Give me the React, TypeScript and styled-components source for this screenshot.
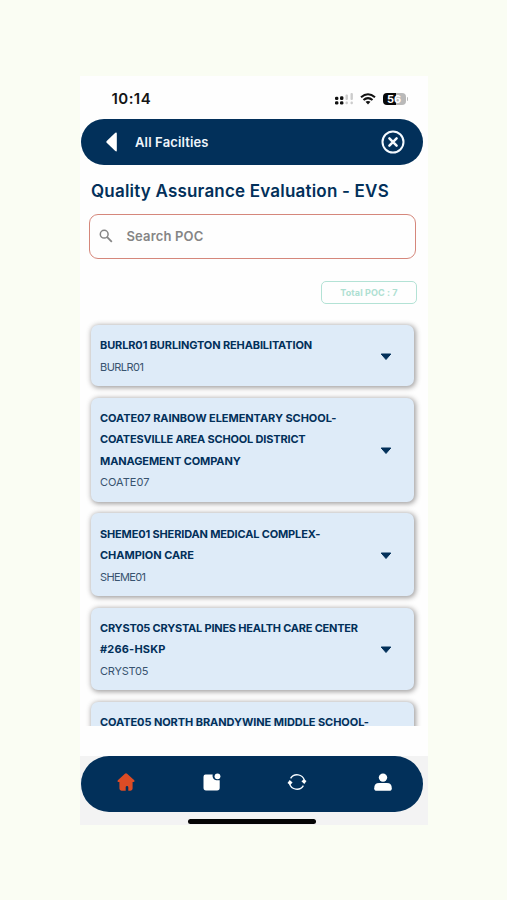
import React from "react";
import styled, { createGlobalStyle } from "styled-components";

const navy = "#02305a";

const GlobalStyle = createGlobalStyle`
  * { box-sizing: border-box; }
  body { margin: 0; background: #fafdf3; font-family: Inter, "Open Sans", sans-serif; color: ${navy}; }
`;

const Page = styled.div`
  height: 900px;
  padding: 76px 79px 0 80px;
  overflow: hidden;
  background: #fafdf3;
`;

const Phone = styled.main`
  display: flex;
  flex-direction: column;
  height: 749px;
  background: #fefefe;
`;

const StatusBar = styled.div`
  display: flex;
  align-items: center;
  justify-content: space-between;
  height: 43px;
  padding: 2px 20px 0 31.5px;
`;

const Text = styled.span<{ $size: number; $weight?: number; $spacing?: number; $color?: string }>`
  display: block;
  white-space: nowrap;
  font-size: ${(p) => p.$size}px;
  font-weight: ${(p) => p.$weight ?? 600};
  letter-spacing: ${(p) => p.$spacing ?? 0}px;
  color: ${(p) => p.$color ?? navy};
`;

const StatusIcons = styled.div`
  display: flex;
  align-items: center;
  gap: 6.5px;
`;

const Battery = styled.div`
  display: flex;
  align-items: center;
  gap: 1px;
`;

const BatteryBody = styled.div`
  width: 23px;
  height: 12px;
  border-radius: 4px;
  background: linear-gradient(90deg, #080808 56%, #b9b9b9 56%);
  color: #fff;
  font-size: 11px;
  font-weight: 700;
  line-height: 12px;
  text-align: center;
`;

const BatteryTip = styled.div`
  width: 1.5px;
  height: 4px;
  border-radius: 0 2px 2px 0;
  background: #b9b9b9;
`;

const Header = styled.header`
  display: flex;
  align-items: center;
  height: 46px;
  margin: 0 5px 0 1px;
  padding: 0 18px 0 25px;
  border-radius: 23px;
  background: ${navy};
`;

const HeaderLabel = styled.div`
  flex: 1;
  padding-left: 18px;
`;

const Title = styled.h1`
  margin: 13px 0 9px 11px;
  height: 27px;
  font-size: 17px;
  font-weight: 600;
  line-height: 27px;
  letter-spacing: 0.2px;
  white-space: nowrap;
`;

const Search = styled.div`
  display: flex;
  align-items: center;
  gap: 14px;
  height: 45px;
  margin: 0 12px 0 8.5px;
  padding: 0 0 1px 9px;
  border: 1.5px solid #d5877b;
  border-radius: 9px;
`;

const Total = styled.div`
  display: flex;
  align-items: center;
  justify-content: center;
  align-self: flex-end;
  width: 96px;
  height: 23px;
  margin: 22px 11px 0 0;
  border: 1.5px solid #b3e2d5;
  border-radius: 5px;
`;

const List = styled.div`
  display: flex;
  flex-direction: column;
  gap: 11.3px;
  height: 410px;
  margin-top: 12px;
  padding: 9px 14px 0 11px;
  overflow: hidden;
`;

const Card = styled.article`
  display: flex;
  flex: none;
  align-items: center;
  justify-content: space-between;
  padding: 10.2px 22px 8.2px 9px;
  border-radius: 7px;
  background: #deebf8;
  box-shadow: 1px 1px 5px 1px rgba(55, 50, 50, 0.45);
`;

const CardText = styled.div`
  line-height: 21.5px;
`;

const Spacer = styled.div`
  flex: 1;
`;

const Bottom = styled.footer`
  height: 69px;
  padding: 0 5px 0 1px;
  background: #f3f3f3;
`;

const Nav = styled.nav`
  display: flex;
  align-items: center;
  justify-content: space-between;
  height: 56px;
  padding: 0 30px 5px 35px;
  border-radius: 28px;
  background: ${navy};
`;

const HomeIndicator = styled.div`
  width: 128px;
  height: 4.5px;
  margin: 7px auto 0;
  border-radius: 3px;
  background: #050505;
`;

type Line = [text: string, spacing: number];

const facilities: { lines: Line[]; code?: Line }[] = [
  { lines: [["BURLR01 BURLINGTON REHABILITATION", -0.13]], code: ["BURLR01", -0.55] },
  {
    lines: [
      ["COATE07 RAINBOW ELEMENTARY SCHOOL-", -0.06],
      ["COATESVILLE AREA SCHOOL DISTRICT", -0.18],
      ["MANAGEMENT COMPANY", -0.1],
    ],
    code: ["COATE07", 0],
  },
  { lines: [["SHEME01 SHERIDAN MEDICAL COMPLEX-", -0.16], ["CHAMPION CARE", -0.04]], code: ["SHEME01", -0.65] },
  { lines: [["CRYST05 CRYSTAL PINES HEALTH CARE CENTER", -0.22], ["#266-HSKP", 0.18]], code: ["CRYST05", -0.2] },
  { lines: [["COATE05 NORTH BRANDYWINE MIDDLE SCHOOL-", -0.07]] },
];

const Signal = () => (
  <svg width="19" height="12" viewBox="0 0 19 12">
    <g fill="#111">
      <rect y="3.7" width="3.4" height="3.3" rx="1.3" />
      <rect y="8.2" width="3.4" height="3.3" rx="1.3" />
      <rect x="5" y="3.2" width="3.4" height="3.8" rx="1.3" />
      <rect x="5" y="8.2" width="3.4" height="3.3" rx="1.3" />
    </g>
    <g fill="#ccc">
      <rect x="10.5" y="1.5" width="2.4" height="5.5" rx="1" />
      <rect x="10.5" y="8.4" width="2.4" height="2.8" rx="1" />
      <rect x="15.5" y="0" width="2.4" height="7" rx="1" />
      <rect x="15.5" y="8.4" width="2.4" height="2.8" rx="1" />
    </g>
  </svg>
);

const Wifi = () => (
  <svg width="16" height="12" viewBox="0 0 16 12" fill="none" stroke="#111" strokeWidth="2.1">
    <path d="M1 4.2Q8-1.7 15 4.2" />
    <path d="M3.5 7Q8 3.1 12.5 7" />
    <path d="M5.5 8.8Q8 7 10.5 8.8L8 11.6Z" fill="#111" stroke="none" />
  </svg>
);

const Back = () => (
  <svg width="11" height="20" viewBox="0 0 11 20">
    <path d="M.7 9.1 9.3.7Q10.8-.2 10.8 1.5V18.5Q10.8 20 9.3 19L.7 10.7Q0 9.9.7 9.1Z" fill="#fff" />
  </svg>
);

const Close = () => (
  <svg width="24" height="24" viewBox="0 0 24 24" fill="none" stroke="#f5faff" strokeLinecap="round">
    <circle cx="12" cy="12" r="10.5" strokeWidth="2" />
    <path d="m8.4 8.4 7.2 7.2m0-7.2-7.2 7.2" strokeWidth="2.5" />
  </svg>
);

const Magnifier = () => (
  <svg width="14" height="14" viewBox="0 0 14 14" fill="none" stroke="#858585" strokeWidth="1.5">
    <circle cx="5.2" cy="5.2" r="3.9" />
    <path d="m8.2 8.2 4.6 4.6" strokeWidth="1.8" />
  </svg>
);

const Caret = () => (
  <svg width="12" height="8" viewBox="0 0 12 8">
    <path d="M1.2 1H10.8L6 6.5Z" fill={navy} stroke={navy} strokeLinejoin="round" />
  </svg>
);

const Home = () => (
  <svg width="20" height="20" viewBox="0 0 20 20">
    <path d="M8.9 1.8Q10 .9 11.1 1.8L18.3 8.3Q19.2 9.8 17.5 10H16.6V16.6Q16.6 18.7 14.5 18.7H12.3V15.3Q12.3 14 11 14T9.7 15.3V18.7H5.5Q3.4 18.7 3.4 16.6V10H2.3Q.8 9.7 1.8 8.3Z" fill="#dc4c25" />
  </svg>
);

const Note = () => (
  <svg width="20" height="20" viewBox="0 0 20 20" fill="#fff">
    <path d="M3.5 2.4H10.7C9.9 6 12.5 9 17.7 8.2V15.8Q17.7 18.4 15.1 18.4H4Q1.5 18.4 1.5 15.8V4.8Q1.5 2.4 3.5 2.4Z" />
    <circle cx="15.5" cy="4.3" r="2.9" />
  </svg>
);

const Sync = () => (
  <svg width="20" height="20" viewBox="0 0 20 20" fill="none" stroke="#f5faff" strokeWidth="1.4">
    <path d="M3.6 6.4A7.6 7.6 0 0 1 17.4 8.4M16.4 13.6A7.6 7.6 0 0 1 2.6 11.6" />
    <path d="M.5 10.9 2.7 8 5.6 10.5 3.1 12.9ZM14.4 9.3 17 7.2 19.5 9.1 17.3 12Z" fill="#fff" stroke="none" />
  </svg>
);

const User = () => (
  <svg width="20" height="20" viewBox="0 0 20 20" fill="#fff">
    <circle cx="10" cy="5.6" r="4.2" />
    <path d="M6.1 11H13.9Q18.8 11 18.8 16.2 18.8 18.8 16.2 18.8H3.8Q1.2 18.8 1.2 16.2 1.2 11 6.1 11Z" />
  </svg>
);

export default function App() {
  return (
    <Page>
      <GlobalStyle />
      <Phone>
        <StatusBar>
          <Text $size={15} $spacing={0.45} $color="#151515">10:14</Text>
          <StatusIcons>
            <Signal />
            <Wifi />
            <Battery><BatteryBody>56</BatteryBody><BatteryTip /></Battery>
          </StatusIcons>
        </StatusBar>
        <Header>
          <Back />
          <HeaderLabel><Text $size={13} $spacing={0.14} $color="#f0f6fc">All Facilties</Text></HeaderLabel>
          <Close />
        </Header>
        <Title>Quality Assurance Evaluation - EVS</Title>
        <Search>
          <Magnifier />
          <Text $size={13} $spacing={0.15} $color="#858585">Search POC</Text>
        </Search>
        <Total><Text $size={9} $weight={700} $spacing={0.12} $color="#aee0d2">Total POC : 7</Text></Total>
        <List>
          {facilities.map(({ lines, code }) => (
            <Card key={lines[0][0]}>
              <CardText>
                {lines.map(([text, spacing]) => (
                  <Text key={text} $size={11} $weight={700} $spacing={spacing}>{text}</Text>
                ))}
                {code && <Text $size={11} $weight={400} $spacing={code[1]} $color="#38536f">{code[0]}</Text>}
              </CardText>
              {code && <Caret />}
            </Card>
          ))}
        </List>
        <Spacer />
        <Bottom>
          <Nav><Home /><Note /><Sync /><User /></Nav>
          <HomeIndicator />
        </Bottom>
      </Phone>
    </Page>
  );
}
